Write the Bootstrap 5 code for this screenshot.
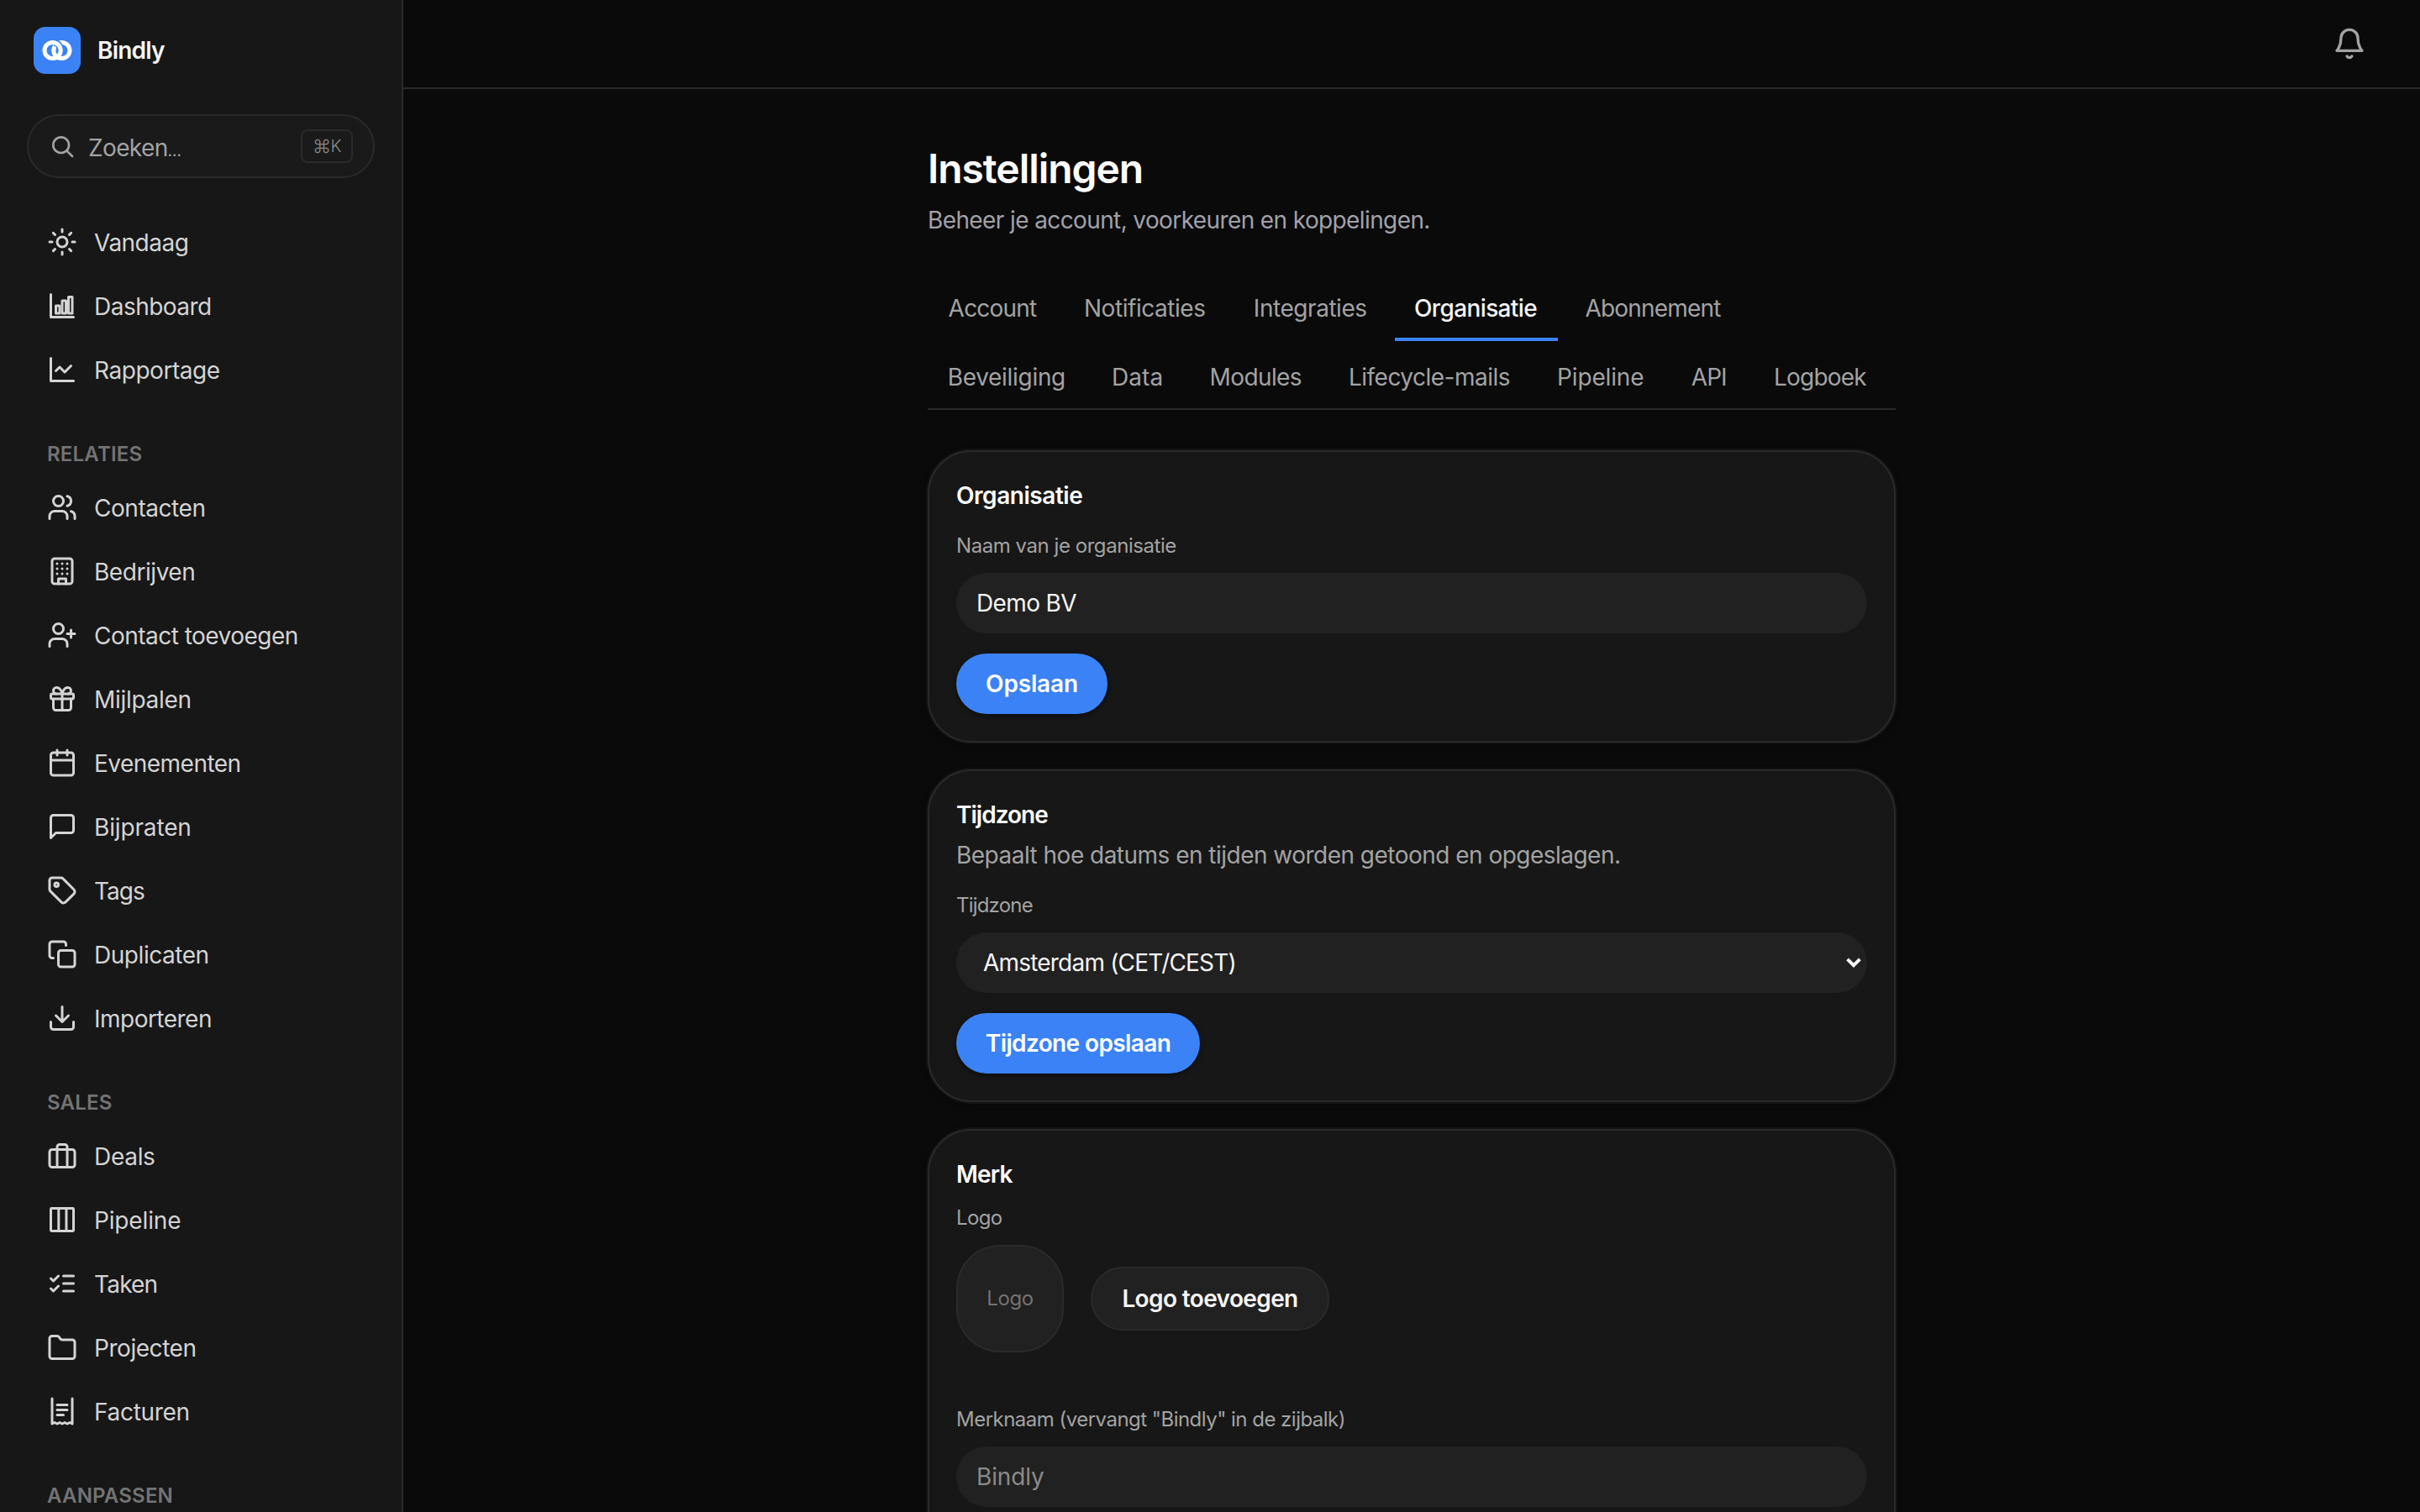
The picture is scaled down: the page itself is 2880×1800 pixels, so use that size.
<!DOCTYPE html>
<html lang="nl" data-bs-theme="dark">
<head>
<meta charset="utf-8">
<meta name="viewport" content="width=device-width, initial-scale=1">
<title>Bindly – Instellingen</title>
<link href="https://cdn.jsdelivr.net/npm/bootstrap@5.3.0/dist/css/bootstrap.min.css" rel="stylesheet">
<style>
body{background:#0a0a0a;color:#f5f5f5;font-family:Inter,"Liberation Sans",sans-serif;font-size:28px;line-height:40px;letter-spacing:-.45px}
svg{fill:none;stroke:currentColor;stroke-width:2;stroke-linecap:round;stroke-linejoin:round;flex-shrink:0}

/* Sidebar */
.side-bar{width:480px;background:#171717;border-right:2px solid #2a2a2a}
.brand-row{padding:32px 40px 0;gap:20px;letter-spacing:-.8px}
.brand-logo{border-radius:14px;background:#3b82f6;width:56px;height:56px}
.search-box{margin:48px 32px 42px;height:76px;padding:0 24px;gap:16px;border:2px solid #2a2a2a;border-radius:38px;background:#1a1a1a;color:#a3a3a3}
.search-hint{padding-top:3px;margin-left:-1px}
.dots{font-size:19px;line-height:1;letter-spacing:0}
.key-hint{width:62px;height:40px;border:2px solid #2a2a2a;border-radius:8px;font-size:20px;font-weight:300;color:#8a8a8a;letter-spacing:-.5px}
.cmd-glyph{font-size:22px}
.side-bar .nav-link{height:68px;margin-bottom:8px;padding:2px 56px 0;gap:20px;color:#d4d4d4}
.side-bar .nav-link svg{margin-top:-2px}
.group-label{padding:43px 56px 13px;font-size:24px;line-height:32px;font-weight:600;letter-spacing:.2px;color:#737373}

/* Top bar */
.top-bar{height:106px;padding:0 64px 0 0;border-bottom:2px solid #2a2a2a;color:#a3a3a3}

/* Page */
.page-col{width:1152px;padding-top:62px}
.page-title{font-size:48px;line-height:66px;letter-spacing:-1.05px}
.page-sub{color:#a1a1aa;letter-spacing:-.61px;margin-bottom:40px}
.tab-row{gap:0 8px;border-bottom:2px solid #2a2a2a;margin-bottom:48px}
.tab-row .nav-link{padding:25px 0 15px;height:84px;margin-bottom:-2px;border:0;border-bottom:4px solid transparent;border-radius:0;color:#a3a3a3;text-align:center;white-space:nowrap}
.tab-row .nav-link.active{color:#f5f5f5;border-color:#3b82f6;font-weight:500;padding-right:2px}
.w-acc{width:154px}.w-not{width:192.5px}.w-int{width:185.5px}.w-org{width:194px}.w-abo{width:210px}
.w-bev{width:187.7px}.w-dat{width:107.9px}.w-mod{width:157.4px}.w-lif{width:240px}.w-pip{width:151.5px}.w-api{width:90.5px}.w-log{width:158px}

.panel{background:#171717;border:2px solid #2a2a2a;border-radius:52px;padding:32px;margin-bottom:32px;box-shadow:0 0 0 2px rgba(255,255,255,.045),0 2px 8px rgba(0,0,0,.3)}
.panel h2{font-size:28px;line-height:40px;font-weight:600;margin:0}
.field-label{display:block;font-size:24px;line-height:32px;color:#a3a3a3;margin-bottom:16px}
.panel .form-control,.panel .form-select{height:72px;border:0;border-radius:36px;background-color:#212121;color:#f5f5f5;font-size:28px;line-height:40px;padding:16px 24px}
.panel .form-control::placeholder{color:#8a8a8a;opacity:1}
.panel .form-select{padding-left:32px;background-image:url("data:image/svg+xml,%3Csvg xmlns='http://www.w3.org/2000/svg' viewBox='0 0 18 12'%3E%3Cpath d='M1.6 1.8L9 9.2l7.4-7.4' fill='none' stroke='%23f5f5f5' stroke-width='4'/%3E%3C/svg%3E");background-size:18px 12px;background-position:right 7px center}
.panel .btn{height:72px;border-radius:38px;padding:0;font-size:28px;line-height:40px;font-weight:600}
.panel .btn-primary{background:#3b82f6;border:0;color:#fff;box-shadow:0 2px 6px rgba(0,0,0,.5)}
.panel .btn-dark{width:284px;height:76px;background:#212121;border:2px solid #2a2a2a;color:#f5f5f5}
.btn-save{width:180px}.btn-zone{width:290px}
.logo-row{gap:32px;margin-bottom:64px}
.logo-slot{width:128px;height:128px;border:2px solid #2a2a2a;border-radius:52px;background:#212121;color:#737373;font-size:24px}
.text-soft{color:#a3a3a3}

/* Tracking steps */
.ls-wide{letter-spacing:.1px}.ls-a{letter-spacing:-.15px}.ls-b{letter-spacing:-.3px}.ls-m{letter-spacing:-.52px}.ls-c{letter-spacing:-.62px}.ls-d{letter-spacing:-.8px}.ls-e{letter-spacing:-.98px}
</style>
</head>
<body class="vh-100 overflow-hidden d-flex">

<aside class="side-bar vh-100 overflow-hidden flex-shrink-0">
  <div class="brand-row d-flex align-items-center fw-semibold">
    <div class="brand-logo">
      <svg class="d-block" width="56" height="56" viewBox="0 0 56 56" stroke-width="5">
        <circle cx="33.4" cy="28" r="9.6" stroke="#fff" style="stroke-width:5"/>
        <path d="M24.4 18.5A9.6 9.6 0 0 1 31.4 23.9" stroke="#3b82f6" style="stroke-width:8;stroke-linecap:butt"/>
        <circle cx="22.6" cy="28" r="9.6" stroke="#fff" style="stroke-width:5"/>
      </svg>
    </div>
    <span>Bindly</span>
  </div>
  <div class="search-box d-flex align-items-center">
    <svg width="32" height="32" viewBox="0 0 24 24"><circle cx="11" cy="11" r="7"/><path d="m21 21-4.8-4.8"/></svg>
    <span class="search-hint flex-grow-1 ls-c">Zoeken<span class="dots">…</span></span>
    <span class="key-hint d-flex align-items-center justify-content-center"><span class="cmd-glyph">⌘</span>K</span>
  </div>
  <nav class="nav flex-column flex-nowrap">
    <a class="nav-link d-flex align-items-center ls-m"><svg width="36" height="36" viewBox="0 0 24 24"><circle cx="12" cy="12" r="4"/><path d="M12 2v2M12 20v2M4.93 4.93l1.41 1.41M17.66 17.66l1.41 1.41M2 12h2M20 12h2M6.34 17.66l-1.41 1.41M19.07 4.93l-1.41 1.41"/></svg>Vandaag</a>
    <a class="nav-link d-flex align-items-center ls-m"><svg width="36" height="36" viewBox="0 0 24 24"><path d="M3 3v18h18"/><rect x="7" y="12" width="3" height="6"/><rect x="12" y="8" width="3" height="10"/><rect x="17" y="5" width="3" height="13"/></svg>Dashboard</a>
    <a class="nav-link d-flex align-items-center"><svg width="36" height="36" viewBox="0 0 24 24"><path d="M3 3v18h18M7 13l3-3 4 4 5-5"/></svg>Rapportage</a>

    <div class="group-label">RELATIES</div>
    <a class="nav-link d-flex align-items-center"><svg width="36" height="36" viewBox="0 0 24 24"><path d="M16 21v-2a4 4 0 0 0-4-4H6a4 4 0 0 0-4 4v2M22 21v-2a4 4 0 0 0-3-3.87M16 3.13a4 4 0 0 1 0 7.75"/><circle cx="9" cy="7" r="4"/></svg>Contacten</a>
    <a class="nav-link d-flex align-items-center"><svg width="36" height="36" viewBox="0 0 24 24"><rect x="4" y="2" width="16" height="20" rx="2"/><path d="M9 22v-4h6v4M8 6h.01M12 6h.01M16 6h.01M8 10h.01M12 10h.01M16 10h.01M8 14h.01M12 14h.01M16 14h.01"/></svg>Bedrijven</a>
    <a class="nav-link d-flex align-items-center ls-m"><svg width="36" height="36" viewBox="0 0 24 24"><path d="M16 21v-2a4 4 0 0 0-4-4H6a4 4 0 0 0-4 4v2M19 8v6M22 11h-6"/><circle cx="9" cy="7" r="4"/></svg>Contact toevoegen</a>
    <a class="nav-link d-flex align-items-center ls-b"><svg width="36" height="36" viewBox="0 0 24 24"><rect x="3" y="8" width="18" height="4" rx="1"/><path d="M12 8v13M19 12v7a2 2 0 0 1-2 2H7a2 2 0 0 1-2-2v-7M7.5 8a2.5 2.5 0 0 1 0-5A4.8 8 0 0 1 12 8a4.8 8 0 0 1 4.5-5 2.5 2.5 0 0 1 0 5"/></svg>Mijlpalen</a>
    <a class="nav-link d-flex align-items-center ls-m"><svg width="36" height="36" viewBox="0 0 24 24"><rect x="3" y="4" width="18" height="18" rx="2"/><path d="M16 2v4M8 2v4M3 10h18"/></svg>Evenementen</a>
    <a class="nav-link d-flex align-items-center ls-a"><svg width="36" height="36" viewBox="0 0 24 24"><path d="M21 15a2 2 0 0 1-2 2H7l-4 4V5a2 2 0 0 1 2-2h14a2 2 0 0 1 2 2z"/></svg>Bijpraten</a>
    <a class="nav-link d-flex align-items-center ls-e"><svg width="36" height="36" viewBox="0 0 24 24"><path d="M12.586 2.586A2 2 0 0 0 11.172 2H4a2 2 0 0 0-2 2v7.172a2 2 0 0 0 .586 1.414l8.704 8.704a2.426 2.426 0 0 0 3.42 0l6.58-6.58a2.426 2.426 0 0 0 0-3.42z"/><circle cx="7.5" cy="7.5" r="1.5"/></svg>Tags</a>
    <a class="nav-link d-flex align-items-center"><svg width="36" height="36" viewBox="0 0 24 24"><rect x="9" y="9" width="13" height="13" rx="2"/><path d="M5 15H4a2 2 0 0 1-2-2V4a2 2 0 0 1 2-2h9a2 2 0 0 1 2 2v1"/></svg>Duplicaten</a>
    <a class="nav-link d-flex align-items-center ls-m"><svg width="36" height="36" viewBox="0 0 24 24"><path d="M21 15v4a2 2 0 0 1-2 2H5a2 2 0 0 1-2-2v-4M7 10l5 5 5-5M12 15V3"/></svg>Importeren</a>

    <div class="group-label">SALES</div>
    <a class="nav-link d-flex align-items-center ls-b"><svg width="36" height="36" viewBox="0 0 24 24"><rect x="2" y="7" width="20" height="14" rx="2"/><path d="M16 21V5a2 2 0 0 0-2-2h-4a2 2 0 0 0-2 2v16"/></svg>Deals</a>
    <a class="nav-link d-flex align-items-center ls-a"><svg width="36" height="36" viewBox="0 0 24 24"><rect x="3" y="3" width="18" height="18" rx=".6"/><path d="M9.2 3v18M15.3 3v18"/></svg>Pipeline</a>
    <a class="nav-link d-flex align-items-center ls-d"><svg width="36" height="36" viewBox="0 0 24 24"><path d="m3 8 2 2 4-4M3 16l2 2 4-4M13 6h8M13 12h8M13 18h8"/></svg>Taken</a>
    <a class="nav-link d-flex align-items-center"><svg width="36" height="36" viewBox="0 0 24 24"><path d="M20 21a2 2 0 0 0 2-2V8a2 2 0 0 0-2-2h-7.9a2 2 0 0 1-1.69-.9L9.6 3.9A2 2 0 0 0 7.93 3H4a2 2 0 0 0-2 2v14a2 2 0 0 0 2 2Z"/></svg>Projecten</a>
    <a class="nav-link d-flex align-items-center ls-b"><svg width="36" height="36" viewBox="0 0 24 24"><path d="M4 2v20l2-1 2 1 2-1 2 1 2-1 2 1 2-1 2 1V2M8 7h8M8 11h8M8 15h5"/></svg>Facturen</a>

    <div class="group-label">AANPASSEN</div>
  </nav>
</aside>

<div class="flex-grow-1 d-flex flex-column vh-100 overflow-hidden">
  <header class="top-bar d-flex align-items-center justify-content-end flex-shrink-0">
    <svg width="40" height="40" viewBox="0 0 24 24"><path d="M6 8a6 6 0 0 1 12 0c0 6 3 9 3 9H3s3-3 3-9M10.3 21a1.94 1.94 0 0 0 3.4 0"/></svg>
  </header>

  <main class="page-col mx-auto">
    <h1 class="page-title fw-semibold mb-2">Instellingen</h1>
    <p class="page-sub">Beheer je account, voorkeuren en koppelingen.</p>

    <nav class="tab-row nav">
      <a class="nav-link w-acc ls-d">Account</a>
      <a class="nav-link w-not">Notificaties</a>
      <a class="nav-link w-int">Integraties</a>
      <a class="nav-link active w-org ls-c">Organisatie</a>
      <a class="nav-link w-abo ls-d">Abonnement</a>
      <a class="nav-link w-bev ls-b">Beveiliging</a>
      <a class="nav-link w-dat ls-wide">Data</a>
      <a class="nav-link w-mod ls-c">Modules</a>
      <a class="nav-link w-lif ls-m">Lifecycle-mails</a>
      <a class="nav-link w-pip ls-a">Pipeline</a>
      <a class="nav-link w-api ls-e">API</a>
      <a class="nav-link w-log ls-d">Logboek</a>
    </nav>

    <section class="panel">
      <h2 class="mb-4">Organisatie</h2>
      <label class="field-label" for="org">Naam van je organisatie</label>
      <input id="org" class="form-control mb-4 ls-c" value="Demo BV">
      <button class="btn btn-primary btn-save ls-a">Opslaan</button>
    </section>

    <section class="panel">
      <h2 class="mb-2 ls-e">Tijdzone</h2>
      <p class="mb-4 ls-m text-soft">Bepaalt hoe datums en tijden worden getoond en opgeslagen.</p>
      <label class="field-label ls-d" for="tz">Tijdzone</label>
      <select id="tz" class="form-select mb-4 ls-d"><option>Amsterdam (CET/CEST)</option></select>
      <button class="btn btn-primary btn-zone ls-c">Tijdzone opslaan</button>
    </section>

    <section class="panel">
      <h2 class="mb-3 ls-d">Merk</h2>
      <span class="field-label ls-c">Logo</span>
      <div class="logo-row d-flex align-items-center">
        <div class="logo-slot d-flex align-items-center justify-content-center">Logo</div>
        <button class="btn btn-dark ls-c">Logo toevoegen</button>
      </div>
      <label class="field-label ls-m" for="merk">Merknaam (vervangt "Bindly" in de zijbalk)</label>
      <input id="merk" class="form-control mb-4 ls-a" placeholder="Bindly">
    </section>
  </main>
</div>

<script src="https://cdn.jsdelivr.net/npm/bootstrap@5.3.0/dist/js/bootstrap.bundle.min.js"></script>
</body>
</html>
